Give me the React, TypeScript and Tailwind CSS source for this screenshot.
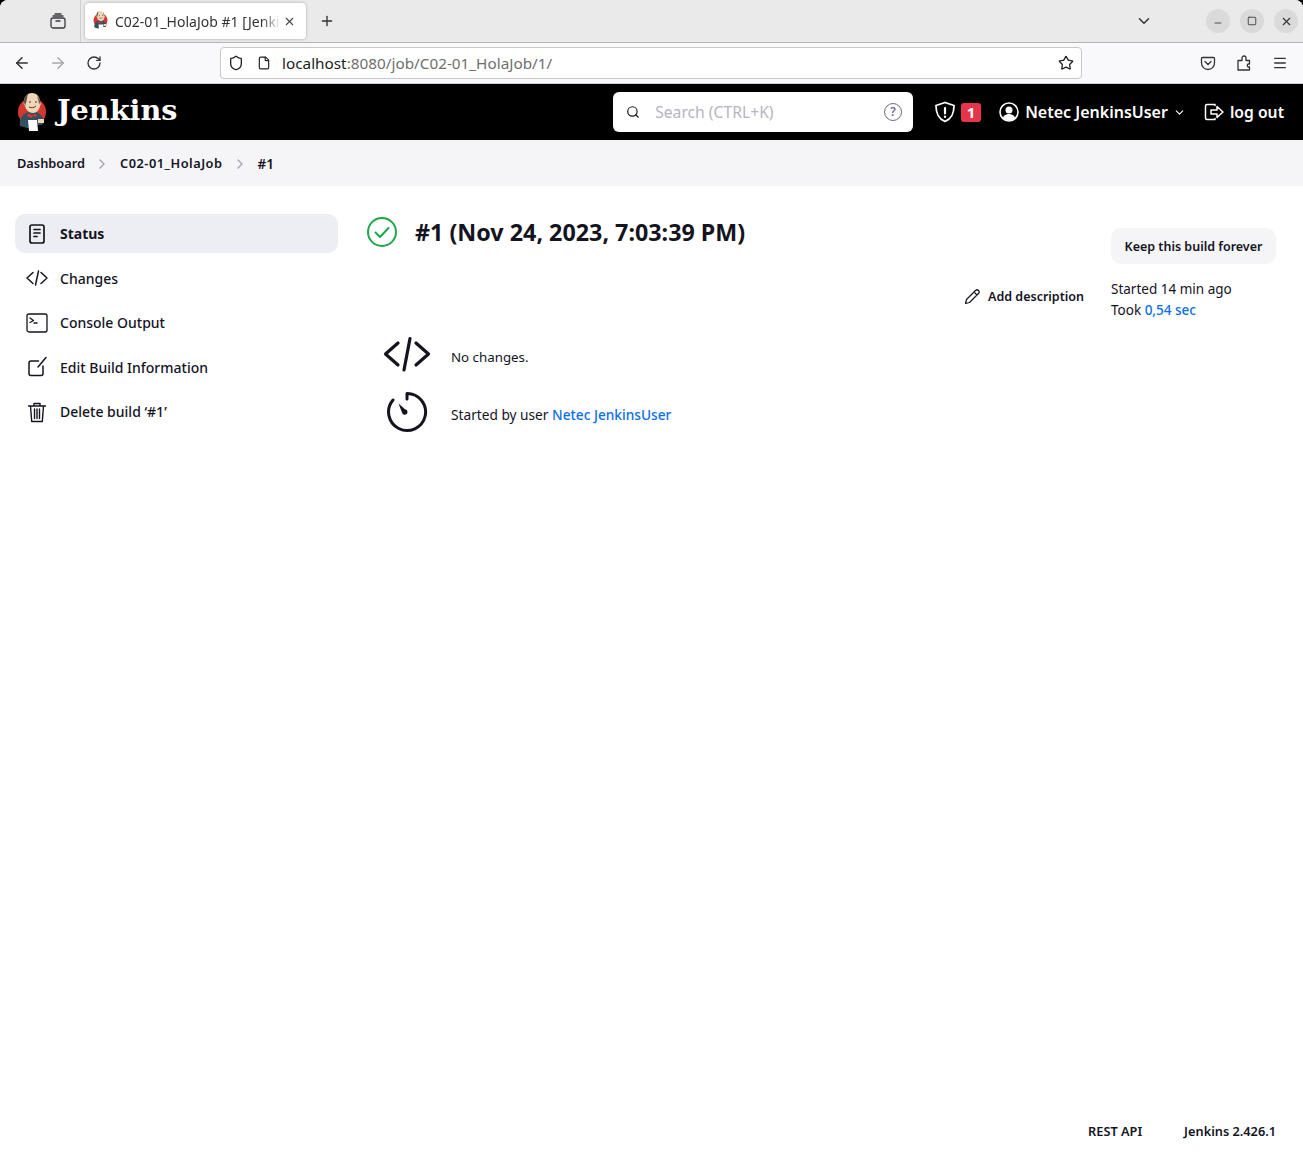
import { ArrowLeft, ArrowRight, ChevronDown, ChevronRight, File, Minus, Plus, RotateCw, Search, Shield, Square, Star, X, Menu } from 'lucide-react'

const font = "font-['Noto_Sans',sans-serif]"

function JenkinsLogo({ size }: { size: number }) {
  return (
    <svg width={size} height={size * 1.3} viewBox="0 0 30 39" aria-hidden>
      <circle cx="15" cy="19" r="14" fill="#d33833" />
      <path d="M3 33c-1-6 1-11 8-14h8c5 2 8 6 8 10l-2 3-5 0-1 3-9 0z" fill="#335061" />
      <path d="M7 9C7 3 11 0 15 0s8 3 8 9c1 1 1 3 0 4-1 4-3 7-7 7-4 0-7-3-8-7-1-1-2-3-1-4z" fill="#f0d6b7" />
      <path d="M7 9C7 4 9 2 11 1c-1 3-1 6-2 9l-1 3z" fill="#5c5148" />
      <path d="M20 3c2 2 3 4 3 6l-1 3c0-3-1-6-2-9z" fill="#5c5148" />
      <path d="M11 20l3 2 6-1-1 3-3-1-2 2-4-2z" fill="#d33833" />
      <path d="M11 27h9l1 11H12z" fill="#fff" />
      <path d="M21 26h6v4h-6z" fill="#f0d6b7" />
      <path d="M12 14c2 1 5 1 7-1" stroke="#49392b" strokeWidth="1" fill="none" />
      <path d="M12 9h2M18 9h2" stroke="#49392b" strokeWidth="1" />
    </svg>
  )
}

function ViewIcon() {
  return (
    <svg width="16" height="16" viewBox="0 0 16 16" fill="none" stroke="#3a3a3f" strokeWidth="1.3" aria-hidden>
      <rect x="1" y="5" width="14" height="10" rx="2" />
      <path d="M3 3h10M5 1h6M6 8h4" strokeLinecap="round" />
    </svg>
  )
}

function SideIcon({ name }: { name: string }) {
  const common = { width: 24, height: 24, viewBox: '0 0 24 24', fill: 'none', stroke: '#14141f', strokeWidth: 1.7, strokeLinecap: 'round' as const, strokeLinejoin: 'round' as const }
  if (name === 'status')
    return (
      <svg {...common}>
        <rect x="5" y="3" width="14" height="18" rx="2" />
        <path d="M9 7.500h6M9 11h6M9 14.500h3" />
      </svg>
    )
  if (name === 'changes')
    return (
      <svg {...common} strokeWidth={1.5}>
        <path d="M8 6.500 2 12l6 5.500M16 6.500l6 5.500-6 5.500M13.500 5l-3 14" />
      </svg>
    )
  if (name === 'console')
    return (
      <svg {...common} strokeWidth={1.3}>
        <rect x="2" y="3" width="20" height="18" rx="2" />
        <path d="m5 7 3.500 2.500L5 11.500M9 12h3" />
      </svg>
    )
  if (name === 'edit')
    return (
      <svg {...common} strokeWidth={1.5}>
        <path d="M13.500 6H6a2 2 0 0 0-2 2v10.500a2 2 0 0 0 2 2h10a2 2 0 0 0 2-2V11M21 2.500 13 12" />
      </svg>
    )
  return (
    <svg {...common} strokeWidth={1.4}>
      <path d="M3.500 6h17M9 6V3.500h6V6M5.500 6l1.200 15.500h10.600L18.500 6M9.500 9v9.500M12 9v9.500M14.500 9v9.500" />
    </svg>
  )
}

const sideItems = [
  { icon: 'status', label: 'Status', active: true },
  { icon: 'changes', label: 'Changes' },
  { icon: 'console', label: 'Console Output' },
  { icon: 'edit', label: 'Edit Build Information' },
  { icon: 'delete', label: 'Delete build ‘#1’' },
]

export default function App() {
  return (
    <div className={`${font} bg-black`}>
      <div className="flex min-h-[1162px] flex-col overflow-hidden rounded-t-[8px] bg-white text-[#14141f]">
        {/* browser tabs */}
        <div className="flex h-[43px] items-center border-b border-[#b4b4b4] bg-[#eaeaea] pr-[5px]">
          <div className="flex h-[42px] w-[81px] items-center justify-end border-r border-[#cfcfcf] pr-[14px]">
            <ViewIcon />
          </div>
          <div className="ml-[4px] flex h-[36px] w-[221px] items-center rounded-[4px] bg-white pl-[8px] pr-[10px] shadow-[0_0_3px_rgba(0,0,0,0.3)]">
            <JenkinsLogo size={15} />
            <span className="ml-[7px] w-[166px] overflow-hidden text-[14px] whitespace-nowrap text-[#333] [mask-image:linear-gradient(to_right,black_88%,transparent)]">
              C02-01_HolaJob #1 [Jenkins]
            </span>
            <X size={13} className="ml-auto text-[#444]" />
          </div>
          <Plus size={16} className="ml-[13px] text-[#333]" />
          <ChevronDown size={18} className="ml-auto mr-[53px] text-[#333]" />
          <div className="flex gap-[10px]">
            <span className="flex h-[24px] w-[24px] items-center justify-center rounded-full bg-[#dadada]"><Minus size={10} className="mt-[4px] text-[#333]" /></span>
            <span className="flex h-[24px] w-[24px] items-center justify-center rounded-full bg-[#dadada]"><Square size={10} className="text-[#333]" /></span>
            <span className="flex h-[24px] w-[24px] items-center justify-center rounded-full bg-[#dadada]"><X size={13} className="text-[#333]" /></span>
          </div>
        </div>

        {/* browser toolbar */}
        <div className="flex h-[41px] items-center border-b border-[#cfcfd8] bg-[#f9f9fb] pl-[13px] pr-[14px]">
          <ArrowLeft size={18} className="text-[#333]" />
          <ArrowRight size={18} className="ml-[18px] text-[#a8a8a8]" />
          <RotateCw size={16} className="ml-[19px] text-[#333]" />
          <div className="ml-[118px] flex h-[32px] w-[862px] items-center rounded-[4px] border border-[#c8c8c8] bg-white pl-[7px] pr-[7px]">
            <Shield size={16} className="text-[#222]" />
            <File size={14} className="ml-[13px] text-[#222]" />
            <span className="ml-[11px] text-[15.300px] text-[#1c1c1c]">localhost<span className="text-[#6f6f6f]">:8080/job/C02-01_HolaJob/1/</span></span>
            <Star size={16} className="ml-auto text-[#222]" />
          </div>
          <svg width="16" height="16" viewBox="0 0 16 16" fill="none" stroke="#333" strokeWidth="1.3" className="ml-[118px]" aria-hidden>
            <path d="M2.500 2.500h11a1 1 0 0 1 1 1V8a6.500 6.500 0 0 1-13 0V3.500a1 1 0 0 1 1-1z" />
            <path d="m5 6.500 3 3 3-3" strokeLinecap="round" />
          </svg>
          <svg width="16" height="16" viewBox="0 0 16 16" fill="none" stroke="#333" strokeWidth="1.3" strokeLinejoin="round" className="ml-[20px]" aria-hidden>
            <path d="M2 5.500h4V3a2 2 0 0 1 4 0v2.500h3.500V9H12a2 2 0 0 0 0 3h1.500v3H2z" />
          </svg>
          <Menu size={16} className="ml-[20px] text-[#333]" />
        </div>

        {/* jenkins header */}
        <header className="flex h-[56px] items-center bg-black pl-[17px] pr-[19px] text-white">
          <JenkinsLogo size={30} />
          <span className="ml-[10px] mt-[-4px] font-['DejaVu_Serif',serif] text-[28.700px] font-bold leading-none">Jenkins</span>
          <div className="ml-auto flex h-[40px] w-[300px] items-center rounded-[6px] bg-white pl-[13px] pr-[11px]">
            <Search size={14} className="text-[#14141f]" />
            <span className="ml-[15px] mt-[1px] text-[15.700px] text-[#b5b5c0]">Search (CTRL+K)</span>
            <span className="ml-auto flex h-[18px] w-[18px] items-center justify-center rounded-full border-[1.500px] border-[#6d6b8a] text-[12px] font-semibold text-[#6d6b8a]">?</span>
          </div>
          <svg width="24" height="24" viewBox="0 0 24 24" fill="none" stroke="#fff" strokeWidth="1.800" className="ml-[20px]" aria-hidden>
            <path d="M12 2.500 3 5.500c0 8 2 13 9 16 7-3 9-8 9-16z" strokeLinejoin="round" />
            <path d="M12 8v5.500M12 16.500v.500" strokeLinecap="round" strokeWidth="2.200" />
          </svg>
          <span className="ml-[4px] flex h-[19px] w-[20px] items-center justify-center rounded-[3px] bg-[#e6354a] text-[15px] font-bold">1</span>
          <svg width="20" height="20" viewBox="0 0 20 20" className="ml-[18px]" aria-hidden>
            <circle cx="10" cy="10" r="9" fill="none" stroke="#fff" strokeWidth="1.600" />
            <circle cx="10" cy="8" r="3.500" fill="#fff" />
            <path d="M3.800 16c1-3 3.500-4 6.200-4s5.200 1 6.200 4a9 9 0 0 1-12.400 0z" fill="#fff" />
          </svg>
          <span className="ml-[6px] text-[16px] font-semibold whitespace-nowrap">Netec JenkinsUser</span>
          <ChevronDown size={13} className="ml-[5px]" />
          <svg width="20" height="20" viewBox="0 0 20 20" fill="none" stroke="#fff" strokeWidth="1.500" strokeLinecap="round" strokeLinejoin="round" className="ml-[18px]" aria-hidden>
            <path d="M11 3.500V2.500H3a1.500 1.500 0 0 0-1.500 1.500v12A1.500 1.500 0 0 0 3 17.500h8v-1M7 8h6V4.500l6 5.500-6 5.500V12H7z" />
          </svg>
          <span className="ml-[6px] mt-[1px] text-[15.700px] font-semibold whitespace-nowrap">log out</span>
        </header>

        {/* breadcrumb */}
        <nav className="flex h-[46px] items-center bg-[#f5f5f8] pl-[17px] pt-[2px] text-[12.800px] font-semibold">
          <span>Dashboard</span>
          <ChevronRight size={16} className="ml-[9px] text-[#a3a3b5]" />
          <span className="ml-[10px] tracking-[0.500px]">C02-01_HolaJob</span>
          <ChevronRight size={16} className="ml-[9px] text-[#a3a3b5]" />
          <span className="ml-[10px] text-[13.500px]">#1</span>
        </nav>

        <div className="flex flex-1 flex-col">
          <div className="flex flex-1 pl-[15px] pr-[27px] pt-[28px]">
            {/* side panel */}
            <aside className="flex w-[323px] shrink-0 flex-col gap-[5.500px]">
              {sideItems.map((item) => (
                <div key={item.label} className={`flex h-[39px] items-center rounded-[10px] pl-[10px] text-[14px] ${item.active ? 'bg-[#edeef3] font-bold' : 'font-medium'}`}>
                  <SideIcon name={item.icon} />
                  <span className="ml-[11px]">{item.label}</span>
                </div>
              ))}
            </aside>

            {/* main */}
            <main className="ml-[29px] flex flex-1 flex-col">
              <div className="flex items-start">
                <div className="flex-1">
                  <div className="flex items-center">
                    <svg width="30" height="30" viewBox="0 0 30 30" fill="none" stroke="#1ea64b" strokeWidth="2" strokeLinecap="round" strokeLinejoin="round" aria-hidden>
                      <circle cx="15" cy="15" r="14" />
                      <path d="m8.500 15.500 4.500 4.500 8.500-9" />
                    </svg>
                    <h1 className="ml-[18px] text-[23.300px] font-bold leading-[36px]">#1 (Nov 24, 2023, 7:03:39 PM)</h1>
                  </div>
                  <div className="mt-[38px] flex items-center justify-end pr-[27px]">
                    <svg width="16" height="16" viewBox="0 0 16 16" fill="none" stroke="#14141f" strokeWidth="1.200" strokeLinejoin="round" aria-hidden>
                      <path d="M1.500 14.500 2.500 10.500 11.500 1.500a1.500 1.500 0 0 1 3 3L5.500 13.500zM10 3l3 3" />
                    </svg>
                    <span className="ml-[8px] text-[12.500px] font-semibold">Add description</span>
                  </div>
                </div>
                <div className="mt-[14px] w-[165px]">
                  <div className="flex h-[36px] items-center justify-center rounded-[10px] bg-[#f5f5f8] pt-[2px] text-[12.500px] font-semibold">Keep this build forever</div>
                  <p className="mt-[15px] text-[13.500px] leading-[21px]">Started 14 min ago</p>
                  <p className="text-[13.500px] leading-[21px]">Took <span className="font-medium text-[#0b6fe8]">0,54 sec</span></p>
                </div>
              </div>
              <div className="mt-[10px] flex items-center">
                <svg width="48" height="48" viewBox="0 0 48 48" fill="none" stroke="#14141f" strokeWidth="3.200" strokeLinecap="round" strokeLinejoin="round" className="ml-[16px]" aria-hidden>
                  <path d="M15 12 2.500 23 15 34M33 12l12.500 11L33 34M27 7.500 21 39" />
                </svg>
                <span className="ml-[20px] mt-[6px] text-[13.300px]">No changes.</span>
              </div>
              <div className="mt-[12px] flex items-center">
                <svg width="42" height="42" viewBox="0 0 42 42" fill="none" stroke="#14141f" strokeWidth="3" strokeLinecap="round" strokeLinejoin="round" className="ml-[19px]" aria-hidden>
                  <path d="M21 2.500a18.500 18.500 0 1 1-14 6.500M21 2.500V8" />
                  <path d="M12.500 12.500 19 18.200a2.800 2.800 0 1 1-3 3.300z" fill="#14141f" stroke="none" />
                </svg>
                <span className="ml-[23px] mt-[6px] text-[13.700px]">Started by user <span className="font-medium text-[#0b6fe8]">Netec JenkinsUser</span></span>
              </div>
            </main>
          </div>

          <footer className="flex h-[62px] items-center justify-end gap-[42px] pr-[27px] pt-[2px] text-[12.750px] font-semibold">
            <span>REST API</span>
            <span>Jenkins 2.426.1</span>
          </footer>
        </div>
      </div>
    </div>
  )
}
